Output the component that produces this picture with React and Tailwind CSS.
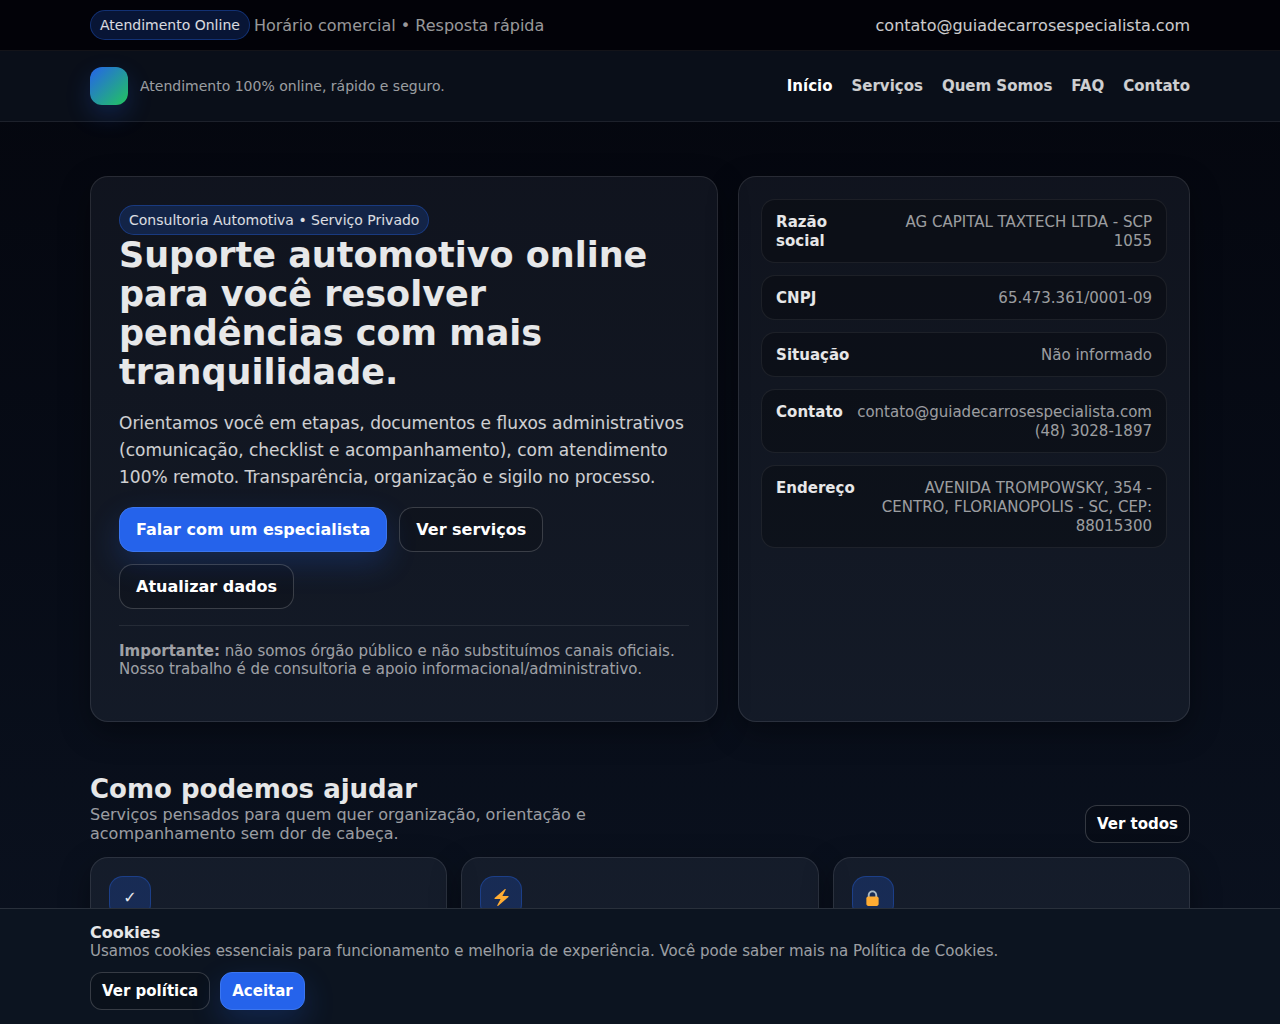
const container = "mx-auto w-full max-w-[1132px] px-4";

const navItems = ["Início", "Serviços", "Quem Somos", "FAQ", "Contato"];

const companyData = [
  { label: "Razão social", lines: ["AG CAPITAL TAXTECH LTDA - SCP 1055"] },
  { label: "CNPJ", lines: ["65.473.361/0001-09"] },
  { label: "Situação", lines: ["Não informado"] },
  { label: "Contato", lines: ["contato@guiadecarrosespecialista.com", "(48) 3028-1897"] },
  { label: "Endereço", lines: ["AVENIDA TROMPOWSKY, 354 - CENTRO, FLORIANOPOLIS - SC, CEP: 88015300"] },
];

function BoltIcon() {
  return (
    <svg viewBox="0 0 36 36" className="size-[17px]" aria-hidden="true">
      <path fill="#FFAC33" d="M32.938 15.651C32.792 15.26 32.418 15 32 15H19.925L26.89 1.458c.219-.426.106-.947-.271-1.243C26.437.071 26.218 0 26 0c-.233 0-.466.082-.653.243L18 6.588 3.347 19.243c-.316.273-.43.714-.284 1.105S3.582 21 4 21h12.075L9.11 34.542c-.219.426-.106.947.271 1.243.182.144.401.215.619.215.233 0 .466-.082.653-.243L18 29.412l14.653-12.655c.317-.273.43-.714.285-1.106z" />
    </svg>
  );
}

function LockIcon() {
  return (
    <svg viewBox="0 0 36 36" className="size-[17px]" aria-hidden="true">
      <path fill="#AAB8C2" d="M18 3C12.477 3 8 7.477 8 13v10h4V13c0-3.313 2.686-6 6-6s6 2.687 6 6v10h4V13c0-5.523-4.477-10-10-10z" />
      <path fill="#FFAC33" d="M31 32c0 2.209-1.791 4-4 4H9c-2.209 0-4-1.791-4-4V20c0-2.209 1.791-4 4-4h18c2.209 0 4 1.791 4 4v12z" />
    </svg>
  );
}

const services = [
  { id: "check", icon: "✓" },
  { id: "bolt", icon: <BoltIcon /> },
  { id: "lock", icon: <LockIcon /> },
];

function Badge({ children }) {
  return (
    <span className="inline-flex h-[30px] items-center rounded-full border border-[#2563eb]/35 bg-[#2563eb]/20 px-[9px] text-[14px] text-white/85">
      {children}
    </span>
  );
}

function Button({ primary, small, children }) {
  const size = small
    ? "h-[38px] rounded-[12px] px-[11px] text-[15px]"
    : "h-[45px] rounded-[14px] px-4 text-[16px]";
  const look = primary
    ? "border-[#3b76f0] bg-[#2563eb] shadow-[0_12px_30px_rgba(37,99,235,0.22)]"
    : "border-white/18 bg-black/15";
  return (
    <button type="button" className={`cursor-pointer whitespace-nowrap border font-bold text-white ${size} ${look}`}>
      {children}
    </button>
  );
}

function TopBar() {
  return (
    <div className="border-b border-white/7 bg-[#020208]">
      <div className={`${container} flex flex-wrap items-center justify-between gap-x-4 py-[10px]`}>
        <div className="flex flex-wrap items-center gap-1">
          <Badge>Atendimento Online</Badge>
          <span className="text-white/60">Horário comercial • Resposta rápida</span>
        </div>
        <a href="#email" className="text-white/80">contato@guiadecarrosespecialista.com</a>
      </div>
    </div>
  );
}

function Header() {
  return (
    <header className="border-b border-white/8 bg-[#0a0f19]">
      <div className={`${container} flex min-h-[70px] flex-wrap items-center justify-between gap-x-4 py-4`}>
        <div className="flex items-center gap-3">
          <span className="size-[38px] shrink-0 rounded-[12px] bg-[linear-gradient(135deg,#2563eb,#22c55e)] shadow-[0_10px_25px_rgba(37,99,235,0.22)]" />
          <span className="text-[14px] text-white/60">Atendimento 100% online, rápido e seguro.</span>
        </div>
        <nav className="flex flex-wrap gap-x-[19px] text-[15px] font-bold">
          {navItems.map((item, i) => (
            <a key={item} href="#" className={i === 0 ? "text-white" : "text-white/80"}>{item}</a>
          ))}
        </nav>
      </div>
    </header>
  );
}

function Hero() {
  return (
    <section className="rounded-[18px] border border-white/10 bg-[#d2dcff]/6 px-7 pt-7 pb-[43px] shadow-[0_10px_30px_rgba(0,0,0,0.35)]">
      <div className="flex">
        <Badge>Consultoria Automotiva • Serviço Privado</Badge>
      </div>
      <h1 className="mt-px text-[35px] leading-[39px] font-bold text-white/90">
        Suporte automotivo online para você resolver pendências com mais tranquilidade.
      </h1>
      <p className="mt-[18px] text-[17px] leading-[27px] text-white/80">
        Orientamos você em etapas, documentos e fluxos administrativos (comunicação, checklist e
        acompanhamento), com atendimento 100% remoto. Transparência, organização e sigilo no processo.
      </p>
      <div className="mt-4 flex flex-wrap gap-3">
        <Button primary>Falar com um especialista</Button>
        <Button>Ver serviços</Button>
        <Button>Atualizar dados</Button>
      </div>
      <hr className="my-4 border-white/8" />
      <p className="text-[15px] leading-[18px] text-white/60">
        <strong>Importante:</strong> não somos órgão público e não substituímos canais oficiais. Nosso
        trabalho é de consultoria e apoio informacional/administrativo.
      </p>
    </section>
  );
}

function CompanyCard() {
  return (
    <section className="rounded-[18px] border border-white/10 bg-[#d2dcff]/6 p-[22px] shadow-[0_10px_30px_rgba(0,0,0,0.35)]">
      <dl className="flex flex-col gap-3 text-[15px] leading-[19px]">
        {companyData.map(({ label, lines }) => (
          <div key={label} className="flex justify-between gap-[10px] rounded-[14px] border border-white/7 bg-black/25 px-[14px] pt-[13px] pb-[11px]">
            <dt className="font-bold text-white/90">{label}</dt>
            <dd className="text-right text-white/60">
              {lines.map((line) => <span key={line} className="block">{line}</span>)}
            </dd>
          </div>
        ))}
      </dl>
    </section>
  );
}

function Services() {
  return (
    <section className="mt-[52px]">
      <div className="flex flex-wrap items-end justify-between gap-4">
        <div>
          <h2 className="text-[26px] leading-[31px] font-bold text-white/90">Como podemos ajudar</h2>
          <p className="max-w-[520px] text-white/60">
            Serviços pensados para quem quer organização, orientação e acompanhamento sem dor de cabeça.
          </p>
        </div>
        <Button small>Ver todos</Button>
      </div>
      <div className="mt-[14px] grid grid-cols-3 gap-[14px]">
        {services.map(({ id, icon }) => (
          <article key={id} className="min-h-[130px] rounded-[18px] border border-white/10 bg-[#d2dcff]/6 p-[18px] shadow-[0_10px_30px_rgba(0,0,0,0.35)]">
            <span className="flex size-[42px] items-center justify-center rounded-[14px] border border-[#2563eb]/35 bg-[#2563eb]/22 text-[16px] text-white/90">
              {icon}
            </span>
          </article>
        ))}
      </div>
    </section>
  );
}

function CookieBar() {
  return (
    <aside className="fixed inset-x-0 bottom-0 border-t border-white/12 bg-[#0c1420]">
      <div className={`${container} py-[14px]`}>
        <p className="font-bold text-white/90">Cookies</p>
        <p className="text-[15px] text-white/60">
          Usamos cookies essenciais para funcionamento e melhoria de experiência. Você pode saber mais na Política de Cookies.
        </p>
        <div className="mt-[11px] flex flex-wrap gap-[10px]">
          <Button small>Ver política</Button>
          <Button small primary>Aceitar</Button>
        </div>
      </div>
    </aside>
  );
}

export default function App() {
  return (
    <div className="min-h-screen bg-linear-to-b from-[#04060d] to-[#0b1220] font-['DejaVu_Sans',sans-serif] text-[16px] leading-[19px]">
      <TopBar />
      <Header />
      <main className={`${container} pt-[54px]`}>
        <div className="grid grid-cols-[139fr_100fr] gap-5">
          <Hero />
          <CompanyCard />
        </div>
        <Services />
      </main>
      <CookieBar />
    </div>
  );
}
